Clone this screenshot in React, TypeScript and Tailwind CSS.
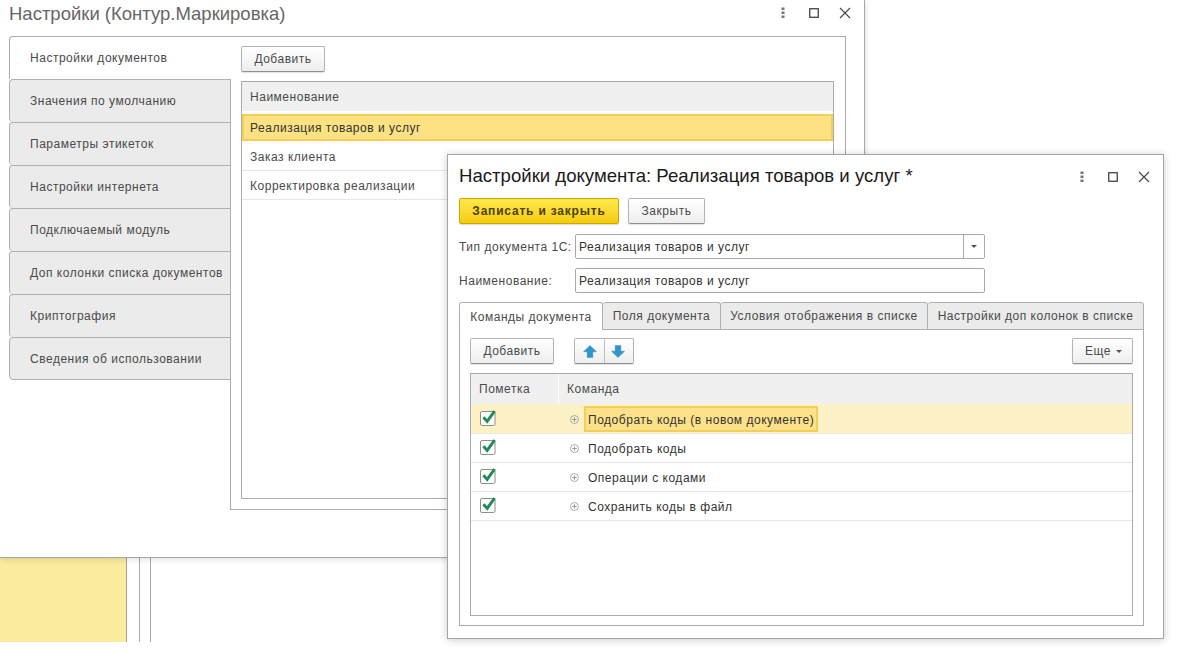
import React from "react";

const Kebab = () => (
  <svg width="4" height="12" viewBox="0 0 4 12" className="block">
    <rect x="0.5" y="0.5" width="3" height="2.5" fill="#777" />
    <rect x="0.5" y="4.5" width="3" height="2.5" fill="#777" />
    <rect x="0.5" y="8.5" width="3" height="2.5" fill="#777" />
  </svg>
);

const WindowButtons = () => (
  <div className="flex items-center">
    <Kebab />
    <svg width="10" height="10" viewBox="0 0 10 10" className="ml-[24px] block">
      <rect x="0.75" y="0.75" width="8.5" height="8.5" fill="none" stroke="#333" strokeWidth="1.2" />
    </svg>
    <svg width="12" height="12" viewBox="0 0 12 12" className="ml-[20px] block">
      <path d="M1 1l10 10M11 1L1 11" fill="none" stroke="#444" strokeWidth="1.1" />
    </svg>
  </div>
);

const Button = ({ children, className = "" }: { children: React.ReactNode; className?: string }) => (
  <div
    className={
      "flex h-[26px] items-center justify-center rounded-[2px] border border-[#b4b4b4] border-b-[#8f8f8f] bg-gradient-to-b from-white to-[#eeeeee] text-[12px] tracking-[0.52px] text-[#4a4a4a] shadow-[0_1px_1px_rgba(0,0,0,0.12)] " +
      className
    }
  >
    {children}
  </div>
);

const Check = () => (
  <svg width="17" height="17" viewBox="0 0 17 17" className="block">
    <rect x="0.5" y="2.5" width="14.5" height="14" rx="1.5" fill="#fff" stroke="#8f8f86" />
    <path d="M3.4 8.2l3.8 4.2L14.6 2" fill="none" stroke="#24895c" strokeWidth="3" />
  </svg>
);

const Plus = () => (
  <svg width="9" height="9" viewBox="0 0 9 9" className="block">
    <circle cx="4.5" cy="4.5" r="4" fill="none" stroke="#999" strokeWidth="0.8" />
    <path d="M2.2 4.5h4.6M4.5 2.2v4.6" stroke="#888" strokeWidth="0.8" />
  </svg>
);

const sideTabs = [
  "Значения по умолчанию",
  "Параметры этикеток",
  "Настройки интернета",
  "Подключаемый модуль",
  "Доп колонки списка документов",
  "Криптография",
  "Сведения об использовании",
];

const commands = ["Подобрать коды", "Операции с кодами", "Сохранить коды в файл"];

const BackWindow = () => (
  <div className="absolute left-0 top-0 h-[558px] w-[865px] border-r border-b border-[#a8a8a8] bg-white shadow-[0_1px_6px_rgba(0,0,0,0.15)]">
    <div className="flex h-[36px] items-start justify-between pr-[13px]">
      <span className="pl-[9px] pt-[2px] text-[18.5px] leading-[24px] text-[#666666]">Настройки (Контур.Маркировка)</span>
      <div className="pt-[7px]">
        <WindowButtons />
      </div>
    </div>
    <div className="flex pl-[9px]">
      <div className="relative z-10 -mr-px w-[222px] shrink-0">
        <div className="flex h-[43px] items-center rounded-tl-[4px] border-t border-l border-[#aaaaaa] bg-white pl-[20px] text-[12px] tracking-[0.52px] text-[#4a4a4a]">
          Настройки документов
        </div>
        {sideTabs.map((t) => (
          <div
            key={t}
            className="flex h-[43px] items-center rounded-l-[4px] border-t border-l border-r border-[#b0b0b0] bg-[#ebebeb] pl-[20px] text-[12px] tracking-[0.52px] whitespace-nowrap text-[#4a4a4a] last:border-b"
          >
            {t}
          </div>
        ))}
      </div>
      <div className="h-[474px] w-[616px] border border-[#aaaaaa] pl-[10px] pr-[10px] pt-[9px] pb-[10px]">
        <Button className="w-[84px]">Добавить</Button>
        <div className="mt-[9px] h-[418px] w-[593px] border border-[#aaaaaa] text-[12px] tracking-[0.52px] text-[#4a4a4a]">
          <div className="flex h-[29px] items-center bg-[#f0f0f0] pl-[8px]">Наименование</div>
          <div className="mt-[3px] flex h-[27px] items-center border-2 border-[#f2cf58] bg-[#fce283] pl-[6px] text-[#333333]">
            Реализация товаров и услуг
          </div>
          <div className="flex h-[30px] items-center border-b border-[#e6e6e6] pl-[8px] pt-[2px]">Заказ клиента</div>
          <div className="flex h-[29px] items-center border-b border-[#e6e6e6] pl-[8px] pt-[1px]">Корректировка реализации</div>
        </div>
      </div>
    </div>
  </div>
);

const docTabs = [
  { label: "Команды документа", w: "w-[144px]" },
  { label: "Поля документа", w: "w-[118px]" },
  { label: "Условия отображения в списке", w: "w-[207px]" },
  { label: "Настройки доп колонок в списке", w: "w-[216px]" },
];

const FrontWindow = () => (
  <div className="absolute left-[447px] top-[154px] h-[485px] w-[717px] border border-[#a4a4a4] bg-white px-[11px] shadow-[0_1px_8px_rgba(0,0,0,0.2)]">
    <div className="flex h-[43px] items-center justify-between pr-[2px]">
      <span className="pb-[2px] text-[18.6px] text-[#1a1a1a]">Настройки документа: Реализация товаров и услуг *</span>
      <WindowButtons />
    </div>
    <div className="flex gap-[9px]">
      <div className="flex h-[26px] w-[160px] items-center justify-center rounded-[2px] border border-[#c9a800] bg-gradient-to-b from-[#ffe94a] to-[#f5cb00] text-[12px] font-bold tracking-[0.8px] text-[#4d4100] shadow-[0_1px_1px_rgba(0,0,0,0.15)]">
        Записать и закрыть
      </div>
      <Button className="w-[77px]">Закрыть</Button>
    </div>
    <div className="mt-[10px] flex h-[25px] items-center text-[12px] tracking-[0.52px] text-[#4a4a4a]">
      <span className="w-[116px] whitespace-nowrap">Тип документа 1С:</span>
      <div className="flex h-full w-[410px] items-center rounded-[2px] border border-[#a8a8a8] pl-[3px] text-[#333333]">
        <span className="flex-1">Реализация товаров и услуг</span>
        <div className="flex h-full w-[21px] items-center justify-center border-l border-[#a8a8a8]">
          <div className="h-0 w-0 border-x-[3px] border-t-[3px] border-x-transparent border-t-[#555555]" />
        </div>
      </div>
    </div>
    <div className="mt-[9px] flex h-[25px] items-center text-[12px] tracking-[0.52px] text-[#4a4a4a]">
      <span className="w-[116px]">Наименование:</span>
      <div className="flex h-full w-[410px] items-center rounded-[2px] border border-[#a8a8a8] pl-[3px] text-[#333333]">
        Реализация товаров и услуг
      </div>
    </div>
    <div className="relative z-10 mt-[9px] -mb-px flex h-[28px] w-[685px] text-[12px] tracking-[0.52px] text-[#4a4a4a]">
      {docTabs.map((t, i) => (
        <div
          key={t.label}
          className={
            "flex items-center justify-center whitespace-nowrap rounded-t-[3px] border-t border-r border-[#b0b0b0] " +
            t.w +
            (i === 0 ? " border-l bg-white" : " border-b bg-[#ebebeb]")
          }
        >
          {t.label}
        </div>
      ))}
    </div>
    <div className="h-[297px] w-[685px] border border-[#aaaaaa] px-[10px] pt-[8px]">
      <div className="flex items-start">
        <Button className="w-[84px]">Добавить</Button>
        <div className="ml-[20px] flex h-[26px] w-[60px] rounded-[2px] border border-[#b4b4b4] border-b-[#8f8f8f] bg-gradient-to-b from-white to-[#eeeeee] shadow-[0_1px_1px_rgba(0,0,0,0.12)]">
          <div className="flex w-[30px] items-center justify-center border-r border-[#c0c0c0]">
            <svg width="14" height="13" viewBox="0 0 14 13" className="block">
              <path d="M7 0.5L13.5 6.8H9.8V12.5H4.2V6.8H0.5z" fill="#2f96cc" stroke="#2a80ad" strokeWidth="0.4" />
            </svg>
          </div>
          <div className="flex flex-1 items-center justify-center pr-[2px]">
            <svg width="14" height="13" viewBox="0 0 14 13" className="block">
              <path d="M7 12.5L13.5 6.2H9.8V0.5H4.2V6.2H0.5z" fill="#2f96cc" stroke="#2a80ad" strokeWidth="0.4" />
            </svg>
          </div>
        </div>
        <Button className="ml-auto w-[61px] gap-[5px] pl-[2px]">
          Еще
          <span className="h-0 w-0 border-x-[3px] border-t-[3px] border-x-transparent border-t-[#555555]" />
        </Button>
      </div>
      <div className="mt-[9px] h-[243px] w-[663px] border border-[#aaaaaa] text-[12px] tracking-[0.52px] text-[#4a4a4a]">
        <div className="flex h-[30px] items-center bg-[#f0f0f0]">
          <span className="h-full w-[88px] border-r border-white pl-[8px] leading-[30px]">Пометка</span>
          <span className="pl-[8px]">Команда</span>
        </div>
        <div className="flex h-[30px] items-center border-b border-[#e6e6e6] bg-[#fdf2c6] pt-[1px] text-[#333333]">
          <span className="w-[88px] pl-[9px] pb-[4px]">
            <Check />
          </span>
          <span className="pl-[11px]">
            <Plus />
          </span>
          <span className="ml-[5px] flex h-[26px] w-[234px] items-center border-2 border-[#f2cf58] bg-[#fde28a] pl-[2px] pt-[1px]">
            Подобрать коды (в новом документе)
          </span>
        </div>
        {commands.map((c) => (
          <div key={c} className="flex h-[29px] items-center border-b border-[#e6e6e6] text-[#333333]">
            <span className="w-[88px] pl-[9px] pb-[4px]">
              <Check />
            </span>
            <span className="pl-[11px]">
              <Plus />
            </span>
            <span className="ml-[9px] pt-[1px]">{c}</span>
          </div>
        ))}
      </div>
    </div>
  </div>
);

export default function App() {
  return (
    <div className="relative h-[654px] w-[1183px] overflow-hidden bg-white font-['Liberation_Sans',Arial,sans-serif]">
      <div className="flex h-[642px]">
        <div className="w-[127px] border-r border-[#a9a58a] bg-[#fbeb9e]" />
        <div className="w-[13px] border-r border-[#a8a8a8]" />
        <div className="w-[11px] border-r border-[#a8a8a8]" />
      </div>
      <BackWindow />
      <FrontWindow />
    </div>
  );
}
